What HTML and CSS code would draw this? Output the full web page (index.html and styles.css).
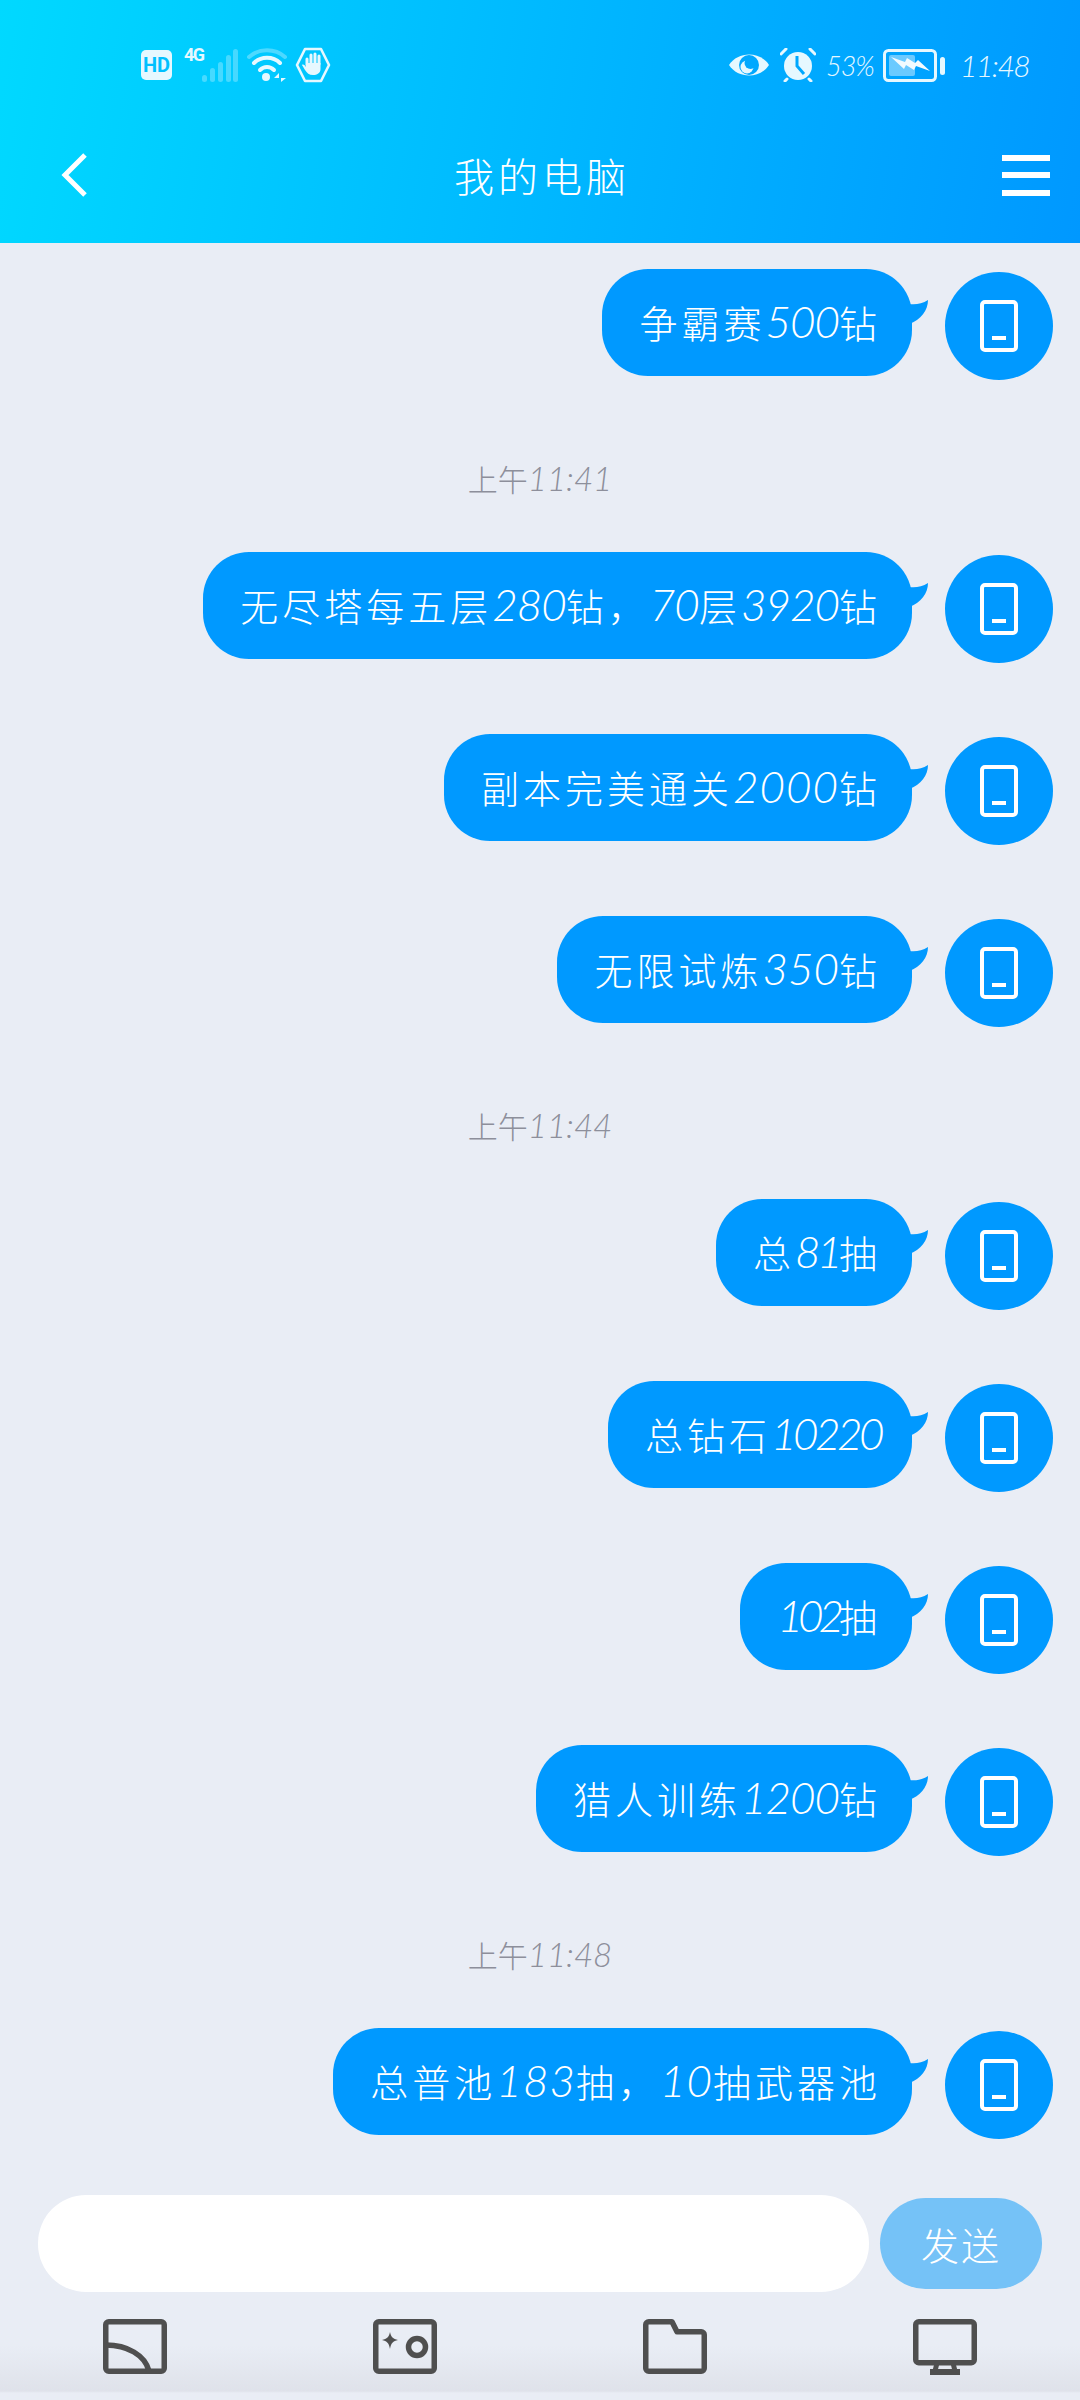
FILE: index.html
```html
<!DOCTYPE html>
<html lang="zh-CN">
<head>
    <meta charset="UTF-8">
    <meta name="viewport" content="width=device-width, initial-scale=1.0">
    <title>我的电脑</title>
    <link rel="stylesheet" href="styles.css">
</head>
<body>
    <svg class="defs" width="0" height="0">
        <symbol id="phone" viewBox="0 0 38 52">
            <rect x="2" y="2" width="34" height="48" rx="3" fill="none" stroke="#fff" stroke-width="4"/>
            <rect x="12" y="36" width="14" height="4" fill="#fff"/>
        </symbol>
        <symbol id="tail" viewBox="0 0 20 26">
            <path d="M0 4C6 5 13 4 19 0C19 10 12 20 0 24Z" fill="#0099ff"/>
        </symbol>
    </svg>

    <header class="top">
        <div class="status">
            <div class="status-left">
                <span class="hd">HD</span>
                <span class="net">4G</span>
                <svg class="signal" width="36" height="33" viewBox="0 0 36 33" fill="#fff" fill-opacity=".28">
                    <rect x="0" y="26" width="5" height="7" rx="2.5"/>
                    <rect x="8" y="19" width="5" height="14" rx="2.5"/>
                    <rect x="16" y="13" width="5" height="20" rx="2.5"/>
                    <rect x="24" y="6" width="5" height="27" rx="2.5"/>
                    <rect x="31" y="0" width="5" height="33" rx="2.5"/>
                </svg>
                <svg class="wifi" width="40" height="34" viewBox="0 0 40 34" fill="none" stroke-linecap="round">
                    <path d="M2 9C12 0 28 0 38 9" stroke="#fff" stroke-opacity=".3" stroke-width="4"/>
                    <path d="M7 15C14 8 26 8 33 15" stroke="#e6f8ff" stroke-width="4"/>
                    <path d="M13 22C17 18 23 18 27 22" stroke="#e6f8ff" stroke-width="4"/>
                    <circle cx="19" cy="29" r="4" fill="#e6f8ff"/>
                    <path d="M32 25L27 30H32ZM34 25V34L39 30H34Z" fill="#e6f8ff"/>
                </svg>
                <svg class="hand" width="36" height="36" viewBox="0 0 36 36">
                    <path d="M10 2H26L34 18L26 34H10L2 18Z" fill="none" stroke="#e6f8ff" stroke-width="2.6" stroke-linejoin="round"/>
                    <path d="M12 18V12M16 17V8M20 17V7M24 17V9" stroke="#e6f8ff" stroke-width="3" stroke-linecap="round"/>
                    <path d="M11 16H25.500V22C25.500 26 22 28 18 28C14 28 12 26 10 23L7 18C8 17 10 18 11 20Z" fill="#e6f8ff"/>
                </svg>
            </div>
            <div class="status-right">
                <svg width="42" height="28" viewBox="0 0 42 28">
                    <path d="M1 14C10 0 32 0 41 14C32 28 10 28 1 14Z" fill="#e6f8ff"/>
                    <circle cx="21" cy="14" r="10" fill="#00a8ff"/>
                    <circle cx="19" cy="16" r="6.500" fill="#e6f8ff"/>
                    <circle cx="22.500" cy="12" r="6" fill="#00a8ff"/>
                </svg>
                <svg class="alarm" width="36" height="34" viewBox="0 0 36 34">
                    <circle cx="18" cy="18" r="14" fill="#e6f8ff"/>
                    <path d="M1 6L6 1M35 6L30 1M7 31L5 33M29 31L31 33" stroke="#e6f8ff" stroke-width="3" stroke-linecap="round"/>
                    <path d="M17 8V18L24 26" fill="none" stroke="#00a8ff" stroke-width="3"/>
                </svg>
                <span class="pct">53%</span>
                <svg class="battery" width="62" height="33" viewBox="0 0 62 33">
                    <rect x="1.5" y="1.5" width="51" height="30" rx="4" fill="none" stroke="#e6f8ff" stroke-width="3"/>
                    <rect x="6" y="6" width="26" height="21" rx="2" fill="#fff" fill-opacity=".42"/>
                    <path d="M8 8L22 13L24 9L32 14L35 11L47 22L33 17L31 21L23 16L21 20Z" fill="#f2fbff"/>
                    <rect x="57" y="8" width="5" height="18" rx="2.5" fill="#e6f8ff"/>
                </svg>
                <span class="clock">11:48</span>
            </div>
        </div>
        <nav class="nav">
            <svg width="28" height="46" viewBox="0 0 28 46">
                <path d="M25 3L5 23L25 43" fill="none" stroke="#fff" stroke-width="5"/>
            </svg>
            <h1>我的电脑</h1>
            <div class="menu"><i></i><i></i><i></i></div>
        </nav>
    </header>

    <main class="chat">
        <div class="row"><div class="bubble tight">争霸赛<span class="num">500</span>钻<svg class="tail"><use href="#tail"/></svg></div><div class="avatar"><svg width="38" height="52"><use href="#phone"/></svg></div></div>
        <div class="time">上午<span class="num">11:41</span></div>
        <div class="row"><div class="bubble tight">无尽塔每五层<span class="num">280</span>钻，<span class="num">70</span>层<span class="num">3920</span>钻<svg class="tail"><use href="#tail"/></svg></div><div class="avatar"><svg width="38" height="52"><use href="#phone"/></svg></div></div>
        <div class="row"><div class="bubble loose">副本完美通关<span class="num">2000</span>钻<svg class="tail"><use href="#tail"/></svg></div><div class="avatar"><svg width="38" height="52"><use href="#phone"/></svg></div></div>
        <div class="row"><div class="bubble">无限试炼<span class="num">350</span>钻<svg class="tail"><use href="#tail"/></svg></div><div class="avatar"><svg width="38" height="52"><use href="#phone"/></svg></div></div>
        <div class="time">上午<span class="num">11:44</span></div>
        <div class="row"><div class="bubble narrow">总<span class="num">81</span>抽<svg class="tail"><use href="#tail"/></svg></div><div class="avatar"><svg width="38" height="52"><use href="#phone"/></svg></div></div>
        <div class="row"><div class="bubble narrow">总钻石<span class="num">10220</span><svg class="tail"><use href="#tail"/></svg></div><div class="avatar"><svg width="38" height="52"><use href="#phone"/></svg></div></div>
        <div class="row"><div class="bubble narrowest"><span class="num">102</span>抽<svg class="tail"><use href="#tail"/></svg></div><div class="avatar"><svg width="38" height="52"><use href="#phone"/></svg></div></div>
        <div class="row"><div class="bubble tight">猎人训练<span class="num">1200</span>钻<svg class="tail"><use href="#tail"/></svg></div><div class="avatar"><svg width="38" height="52"><use href="#phone"/></svg></div></div>
        <div class="time">上午<span class="num">11:48</span></div>
        <div class="row"><div class="bubble loose">总普池<span class="num">183</span>抽，<span class="num">10</span>抽武器池<svg class="tail"><use href="#tail"/></svg></div><div class="avatar"><svg width="38" height="52"><use href="#phone"/></svg></div></div>
    </main>

    <footer class="bottom">
        <div class="composer">
            <input class="field" type="text">
            <button class="send">发送</button>
        </div>
        <div class="tools">
            <svg width="64" height="56" viewBox="0 0 64 56" fill="none" stroke="#4f4f4f" stroke-width="5.5">
                <rect x="2.750" y="2.750" width="58.500" height="49.500" rx="3"/>
                <path d="M3 26C24 26 42 36 46 52"/>
            </svg>
            <svg width="64" height="56" viewBox="0 0 64 56" fill="none" stroke="#4f4f4f" stroke-width="5.5">
                <rect x="2.750" y="2.750" width="58.500" height="49.500" rx="3"/>
                <circle cx="44" cy="28" r="8.500"/>
                <path d="M17 13C18 18 20 20 25 21C20 22 18 24 17 30C16 24 14 22 9 21C14 20 16 18 17 13Z" fill="#4f4f4f" stroke="none"/>
            </svg>
            <svg width="64" height="56" viewBox="0 0 64 56" fill="none" stroke="#4f4f4f" stroke-width="5.5" stroke-linejoin="round">
                <path d="M5.750 2.750H29L34 12.750H58.250A3 3 0 0 1 61.250 15.750V49.250A3 3 0 0 1 58.250 52.250H5.750A3 3 0 0 1 2.750 49.250V5.750A3 3 0 0 1 5.750 2.750Z"/>
            </svg>
            <svg width="64" height="56" viewBox="0 0 64 56" fill="none" stroke="#4f4f4f" stroke-width="5.5">
                <rect x="2.750" y="2.750" width="58.500" height="41" rx="3"/>
                <path d="M24 44L22 52M40 44L42 52" stroke-width="5"/>
                <rect x="17" y="50" width="30" height="6" fill="#4f4f4f" stroke="none"/>
            </svg>
        </div>
    </footer>
</body>
</html>
```

FILE: styles.css
```css
* {
    box-sizing: border-box;
}

body {
    margin: 0;
    width: 1080px;
    height: 2400px;
    overflow: hidden;
    display: flex;
    flex-direction: column;
    background-color: #e9edf5;
    font-family: "Noto Sans CJK SC", sans-serif;
    font-weight: 300;
}

.defs {
    position: absolute;
}

.top {
    height: 243px;
    flex-shrink: 0;
    padding-top: 48px;
    color: #fff;
    background: linear-gradient(100deg, #00d9ff 0%, #00c2ff 35%, #00a8ff 75%, #0098ff 100%);
}

.status {
    height: 34px;
    padding: 0 52px 0 141px;
    display: flex;
    justify-content: space-between;
    align-items: center;
}

.status-left,
.status-right {
    display: flex;
    align-items: center;
}

.hd {
    width: 31px;
    height: 30px;
    margin-right: 12px;
    border-radius: 5px;
    background-color: #e6f8ff;
    color: #00c0ff;
    font: 700 20px/30px Roboto, sans-serif;
    text-align: center;
}

.net {
    width: 18px;
    align-self: flex-start;
    color: #e6f8ff;
    font: 700 18px/16px Roboto, sans-serif;
    letter-spacing: -1.500px;
    white-space: nowrap;
}

.wifi {
    margin-left: 9px;
    margin-right: 8px;
}

.status-right {
    color: #e6f8ff;
    font-family: Lato, sans-serif;
    font-style: italic;
    font-weight: 300;
}

.alarm {
    margin-left: 10px;
    margin-right: 10px;
}

.pct {
    width: 49px;
    font-size: 27px;
    letter-spacing: -1px;
    white-space: nowrap;
}

.battery {
    margin-left: 8px;
    margin-right: 15px;
}

.clock {
    width: 68px;
    font-size: 30px;
    letter-spacing: -1.500px;
}

.nav {
    height: 46px;
    margin-top: 70px;
    padding: 0 30px 0 60px;
    display: flex;
    justify-content: space-between;
    align-items: center;
}

.nav h1 {
    margin: 0 0 0 -6px;
    font-size: 40px;
    line-height: 46px;
    font-weight: 300;
    letter-spacing: 4px;
}

.menu {
    width: 48px;
    height: 41px;
    display: flex;
    flex-direction: column;
    justify-content: space-between;
}

.menu i {
    height: 6px;
    background-color: #fff;
}

.chat {
    flex: 1;
    min-height: 0;
    padding: 26px 27px 0 0;
    overflow: hidden;
}

.row {
    display: flex;
    justify-content: flex-end;
    align-items: flex-start;
    gap: 33px;
    margin-bottom: 71px;
}

.bubble {
    position: relative;
    height: 107px;
    padding: 0 31px 0 37px;
    border-radius: 46px;
    background-color: #0099ff;
    color: #fff;
    font-size: 38px;
    line-height: 105px;
    letter-spacing: 4px;
    white-space: nowrap;
}

.num {
    font-family: Lato, sans-serif;
    font-style: italic;
    font-weight: 300;
    font-size: 44px;
    letter-spacing: 0;
}

.tight .num {
    letter-spacing: -1px;
}

.loose .num {
    letter-spacing: 1px;
}

.narrow .num {
    letter-spacing: -3.500px;
}

.narrowest .num {
    letter-spacing: -5px;
}

.tail {
    position: absolute;
    top: 31px;
    right: -17px;
    width: 20px;
    height: 26px;
}

.avatar {
    width: 108px;
    height: 108px;
    margin-top: 3px;
    border-radius: 50%;
    background-color: #0099ff;
    display: flex;
    justify-content: center;
    align-items: center;
}

.time {
    height: 40px;
    margin: 78px 0 54px 27px;
    color: #8d8f9b;
    font-size: 30px;
    line-height: 40px;
    text-align: center;
}

.time .num {
    font-size: 33px;
}

.bottom {
    height: 205px;
    flex-shrink: 0;
    background: linear-gradient(#e9edf5 0, #e9edf5 150px, #dfe2ea 196px, #e9edf5 198px);
}

.composer {
    height: 97px;
    padding: 0 38px;
    display: flex;
    align-items: center;
    gap: 11px;
}

.field {
    width: 831px;
    height: 97px;
    border: none;
    border-radius: 48px;
    background-color: #fff;
}

.send {
    width: 162px;
    height: 91px;
    padding: 0;
    border: none;
    border-radius: 46px;
    background-color: #75c2f7;
    color: #fff;
    font-family: inherit;
    font-weight: 300;
    font-size: 38px;
    letter-spacing: 2px;
}

.tools {
    margin-top: 27px;
    padding-left: 103px;
    display: flex;
    gap: 206px;
}
```
